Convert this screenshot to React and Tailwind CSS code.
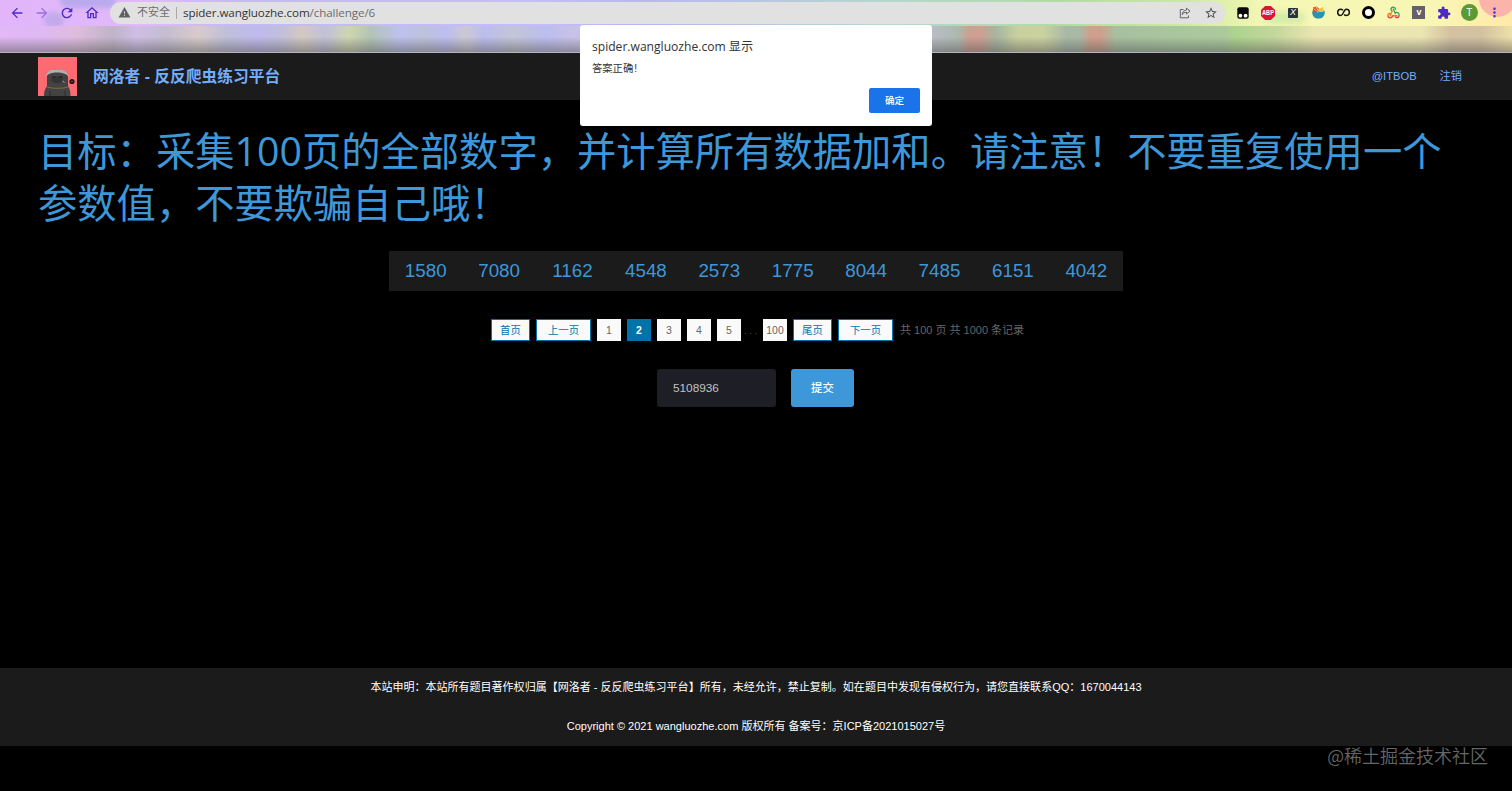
import { MdArrowBack, MdArrowForward, MdRefresh, MdOutlineHome, MdMoreVert, MdWarning, MdStarOutline, MdExtension } from "react-icons/md";

const numbers = [1580, 7080, 1162, 4548, 2573, 1775, 8044, 7485, 6151, 4042];

function PageButton({ children, active }) {
  return (
    <a
      href="#"
      className={
        "flex h-[22px] w-6 items-center justify-center pt-px text-[10.4px] " +
        (active ? "bg-[#0073a9] font-bold text-white" : "bg-[#fafafa] text-[#666]")
      }
    >
      {children}
    </a>
  );
}

function PageLink({ children, width }) {
  return (
    <a
      href="#"
      className={
        "flex h-[22px] items-center justify-center border border-[#0073a9] bg-[#fafafa] pt-px text-[10.4px] text-[#0073a9] " +
        width
      }
    >
      {children}
    </a>
  );
}

function ShareIcon() {
  return (
    <svg className="h-3 w-3" viewBox="0 0 12 12" fill="none" stroke="#5f6368" strokeWidth="1">
      <path d="M4.5 2.5H1.3v8.3h8.2V8.5" />
      <path d="M7.5 1.2 11 4.1 7.5 7V5.3C5.3 5.3 4 6 3.2 7.6 3.4 4.9 5 3.2 7.5 3z" strokeLinejoin="round" />
    </svg>
  );
}

function Extensions() {
  return (
    <div className="flex items-center">
      <span className="flex w-[25.2px] justify-center">
        <svg className="h-3 w-3" viewBox="0 0 12 12">
          <rect x="0.3" y="0.3" width="11.4" height="11.4" rx="2" fill="#080808" />
          <circle cx="3.4" cy="8.7" r="1.9" fill="#fff" />
          <circle cx="8.6" cy="8.7" r="1.9" fill="#fff" />
        </svg>
      </span>
      <span className="flex w-[25.2px] justify-center">
        <svg className="h-[14px] w-[14px]" viewBox="0 0 14 14">
          <path d="M4.1 0h5.8L14 4.1v5.8L9.9 14H4.1L0 9.9V4.1z" fill="#df1535" />
          <text x="7" y="9.3" textAnchor="middle" fontSize="6.5" textLength="12" lengthAdjust="spacingAndGlyphs" fontWeight="700" fontFamily="Liberation Sans, sans-serif" fill="#fff">
            ABP
          </text>
        </svg>
      </span>
      <span className="flex w-[25.2px] justify-center">
        <span className="flex h-[10px] w-[10px] items-center justify-center rounded-[1px] bg-[#29313b] text-[9px] leading-none text-white italic">
          X
        </span>
      </span>
      <span className="flex w-[25.2px] justify-center">
        <svg className="h-[13px] w-[13px]" viewBox="0 0 13 13">
          <path d="M1 1.5 4.5.6 8 3.5V6H.8z" fill="#e3482d" />
          <path d="M6 3.5 11 1l1.3 4.8H5z" fill="#f6c143" />
          <path d="m1.5 2.5 3 2.5M4 1l2 3" stroke="#f9d65c" />
          <path d="M.3 5.3c1.7 1.2 9.3 1.2 12.4-.3C13.3 9.5 10.5 12.6 6.5 12.6S-.3 9.5.3 5.3z" fill="#2c93ad" />
        </svg>
      </span>
      <span className="flex w-[25.2px] justify-center">
        <svg className="h-[9px] w-[13px]" viewBox="0 0 13 9" fill="none" stroke="#15150f" strokeWidth="1.5">
          <path d="M5.9 2.3C5.3 1.6 4.6 1.3 3.8 1.3a3 3 0 1 0 0 6.2C6.6 7.5 6.4 1.3 9.3 1.3a3 3 0 1 1 0 6.2C8.5 7.5 7.8 7.2 7.2 6.5" />
        </svg>
      </span>
      <span className="flex w-[25.2px] justify-center">
        <span className="h-[13px] w-[13px] rounded-full border-[3.5px] border-black bg-white" />
      </span>
      <span className="flex w-[25.2px] justify-center">
        <svg className="h-[13px] w-[13px]" viewBox="0 0 13 13" fill="none" strokeWidth="1.3" strokeLinecap="round">
          <path d="M4.5 4.7a2.2 2.2 0 1 1 3.9-1.3" stroke="#23a455" />
          <path d="M6.3 3 8.2 7.3a2.2 2.2 0 0 1 3.9 1" stroke="#2aa567" />
          <path d="M5.3 5 3.1 9.7" stroke="#f08a24" />
          <path d="M3 7.5a2.2 2.2 0 1 0 2.4 2.3h4.5" stroke="#ed3a38" />
          <path d="M12.1 9.3a2.2 2.2 0 0 1-3.4 2" stroke="#d63a4b" />
          <path d="M1 9.5a2.2 2.2 0 0 1 1-1.7" stroke="#f2b430" />
        </svg>
      </span>
      <span className="flex w-[25.2px] justify-center">
        <span className="flex h-[13px] w-[13px] items-center justify-center bg-[#666068] text-[9px] font-bold leading-none text-white">v</span>
      </span>
      <span className="flex w-[25.2px] justify-center">
        <MdExtension className="h-[14px] w-[14px] text-[#4d2bc3]" />
      </span>
      <span className="flex w-[25.2px] justify-center">
        <span className="flex h-[17px] w-[17px] shrink-0 items-center justify-center rounded-full bg-[#5b9a35] text-[10px] text-white">T</span>
      </span>
      <span className="flex w-[25.2px] justify-center">
        <MdMoreVert className="h-[15px] w-[15px] text-[#5330c0]" />
      </span>
    </div>
  );
}

function BrowserBar() {
  return (
    <div className="relative h-[53px] shrink-0 overflow-hidden bg-[linear-gradient(90deg,#e2b5fb_0%,#dfb9fa_10%,#c3b9f5_16%,#c4bdfb_35%,#b9b6f4_42%,#b4d7ce_58%,#b1dba5_70%,#cbe99f_78%,#f6f8b6_84%,#f9f6b4_95%,#ffe9a8_100%)]">
      {/* Theme artwork */}
      <span className="absolute -top-5 -right-1 h-[37px] w-[37px] rounded-full bg-[#fbb4aa]" />
      <span className="absolute top-3 left-11 h-4 w-5 rounded-full bg-[#c3abeb] blur-[2px]" />
      <span className="absolute -top-2 left-15 h-4 w-14 rounded-full bg-[#bba9ed] blur-[2px]" />
      <span className="absolute top-3 left-[1265px] h-3 w-10 rounded-full bg-[#d3eba6] blur-[3px]" />
      {/* Bookmarks */}
      <div className="absolute inset-x-0 top-[26px] h-[27px] bg-[linear-gradient(90deg,#e2b8f6_0%,#deb9f2_3%,#dfbcdd_5%,#c0b4c8_7.5%,#cfbde6_9%,#c4bdd0_11%,#d9cbca_13.1%,#bfbfda_15%,#bfb9ee_17%,#c0bedc_18.5%,#d4c9c1_20%,#c1c1d8_21.5%,#cfd6ae_23.1%,#b2c4b4_24.5%,#bdc1ef_26.5%,#bcc3da_28%,#bdbdf0_29.5%,#ccc9d3_30.8%,#bbbdee_32%,#c4c5d6_34%,#bbbdee_36%,#c9c2e8_38%,#b8bcc4_61.8%,#acbab0_63.3%,#ce9f92_64.1%,#ce9f92_64.9%,#a6b69f_65.9%,#c9cf9e_67.3%,#cbd19e_69%,#a9b9a6_70.5%,#a9b9a6_71.4%,#cf9f8d_72.1%,#cf9f8d_72.8%,#a8bfa0_73.8%,#a8c79e_78%,#acc99d_81%,#add48d_81.7%,#c3d79c_84.3%,#ebe6b0_87%,#ebe5b2_94%,#d3c1a1_96%,#d3c1a1_98%,#eee0a8_100%)]" />
      <div className="absolute inset-x-0 top-[26px] h-[27px] bg-linear-to-b from-transparent from-40% to-[#555]/55" />
      <div className="absolute inset-x-0 bottom-0 h-px bg-[#b9b3bd]" />
      {/* Toolbar */}
      <div className="relative flex h-[25px] items-center">
        <div className="flex w-[110px] shrink-0 items-center gap-[9px] pl-[9px] text-[#4f2bbd]">
          <MdArrowBack className="h-4 w-4" />
          <MdArrowForward className="h-4 w-4 text-[#9b6edb]" />
          <MdRefresh className="h-4 w-4" />
          <MdOutlineHome className="h-4 w-4" />
        </div>
        <div className="flex h-[22px] w-[1115px] shrink-0 items-center rounded-full bg-[#e1e1e1] pr-[7px] pl-[8px]">
          <MdWarning className="h-[13px] w-[13px] text-[#5f6063]" />
          <span className="ml-[6px] text-[11px] text-[#6d6e70]">不安全</span>
          <span className="mx-[6px] h-3 w-px bg-[#a9a9a9]" />
          <span className="font-['Open_Sans',sans-serif] text-[11.65px] tracking-[-0.1px] text-[#6b6c6e]">
            <span className="text-[#333]">spider.wangluozhe.com</span>/challenge/6
          </span>
          <span className="ml-auto flex items-center gap-[13px]">
            <ShareIcon />
            <MdStarOutline className="h-[14px] w-[14px] text-[#4d4f52]" />
          </span>
        </div>
        <div className="ml-[5px] shrink-0">
          <Extensions />
        </div>
      </div>
    </div>
  );
}

function Avatar() {
  return (
    <svg className="h-[39px] w-[39px]" viewBox="0 0 39 39">
      <rect width="39" height="39" fill="#fc6b72" />
      {/* Body */}
      <path d="M6 39C6 34 7.5 31 9 29V20C9 15 13 12.5 19 12.5S30 15 30 20v9c1.5 2 2.5 5 2.5 10z" fill="#434344" />
      {/* Hair */}
      <path d="M7.5 20C8.5 15 12.5 12.3 19 12.3S30 15 31 20C28 16.5 24 15.5 19 15.5S10.5 16.5 7.5 20z" fill="#b5adaf" />
      {/* Face */}
      <path d="M13.5 19.5h11.5v4.5l-3 2h-5.5l-3-2z" fill="#343437" />
      <path d="M14.5 19.5l3 1M24 19.5l-3 1" stroke="#1d1d1f" />
      <path d="M24.5 24l2 1.5" stroke="#b5adaf" />
      <path d="M9 30c6 1.8 15 1.8 21.5 0" fill="none" stroke="#8c713d" strokeWidth="0.9" />
      <path d="M12 34v5M27 34v5" stroke="#2b2b2d" />
      <circle cx="34" cy="24.5" r="2.6" fill="#24171a" />
      <circle cx="34" cy="24.5" r=".8" fill="#98463a" />
    </svg>
  );
}

function AlertDialog() {
  return (
    <div className="absolute top-[25px] left-[580px] flex h-[101px] w-[352px] flex-col rounded-[3px] bg-white px-[12px] pt-[13px]">
      <p className="font-['Open_Sans','Noto_Sans_CJK_SC',sans-serif] text-[12.1px] leading-[18px] text-[#333]">
        spider.wangluozhe.com 显示
      </p>
      <p className="mt-[5px] text-[10.3px] leading-4 text-[#333]">
        答案正确<span className="ml-px">!</span>
      </p>
      <button className="mt-[11px] flex h-[25px] w-[51px] items-center justify-center self-end rounded-[2px] bg-[#1a73e8] pt-px text-[9.5px] font-medium text-white">
        确定
      </button>
    </div>
  );
}

export default function App() {
  return (
    <div className="relative flex h-[791px] w-[1512px] flex-col overflow-hidden bg-black font-['Liberation_Sans','Noto_Sans_CJK_SC',sans-serif]">
      <BrowserBar />

      {/* Header */}
      <header className="flex h-[47px] shrink-0 items-center bg-[#1b1b1b] pr-[50px] pl-[38px] text-[#72aefc]">
        <Avatar />
        <h1 className="ml-[16px] pt-px text-[15.75px] font-bold">网洛者 - 反反爬虫练习平台</h1>
        <nav className="ml-auto flex gap-[23px] text-[11.2px]">
          <a href="#">@ITBOB</a>
          <a href="#">注销</a>
        </nav>
      </header>

      {/* Challenge */}
      <main className="flex flex-1 flex-col items-center">
        <h2 className="mt-[25px] mb-[2px] w-[1436px] font-['Open_Sans','Noto_Sans_CJK_SC',sans-serif] text-[39.3px] leading-[52px] text-[#3d97d9]">
          目标：采集100页的全部数字，并计算所有数据加和。请注意！不要重复使用一个参数值，不要欺骗自己哦！
        </h2>

        <div className="mt-[20px] grid h-[40px] w-[734px] grid-cols-10 items-center bg-[#1b1b1b] text-center text-[18.8px] text-[#3d97d9]">
          {numbers.map((n) => (
            <span key={n}>{n}</span>
          ))}
        </div>

        <div className="mt-[28px] flex w-[1512px] items-center gap-[6px] pl-[491px]">
          <PageLink width="w-[39px]">首页</PageLink>
          <PageLink width="w-[55px]">上一页</PageLink>
          <PageButton>1</PageButton>
          <PageButton active>2</PageButton>
          <PageButton>3</PageButton>
          <PageButton>4</PageButton>
          <PageButton>5</PageButton>
          <span className="-mx-[6px] w-[22px] pt-px text-center text-[10.4px] tracking-[2.5px] text-[#444]">...</span>
          <PageButton>100</PageButton>
          <PageLink width="w-[39px]">尾页</PageLink>
          <PageLink width="w-[55px]">下一页</PageLink>
          <span className="ml-px pt-px text-[11px] text-[#666]">共 100 页 共 1000 条记录</span>
        </div>

        <form className="mt-[28px] flex gap-[15px] pr-px">
          <input
            className="h-[38px] w-[119px] rounded-[3px] bg-[#1e1e26] px-[16px] text-[11.8px] text-[#c2c2c2]"
            defaultValue="5108936"
          />
          <button type="button" className="h-[38px] w-[63px] rounded-[3px] bg-[#3d97d9] pt-px text-[11.4px] font-medium text-white">
            提交
          </button>
        </form>
      </main>

      {/* Footer */}
      <footer className="mb-[45px] h-[78px] shrink-0 bg-[#1b1b1b] text-center text-[11.03px] leading-[39px] text-white">
        <p>本站申明：本站所有题目著作权归属【网洛者 - 反反爬虫练习平台】所有，未经允许，禁止复制。如在题目中发现有侵权行为，请您直接联系QQ：1670044143</p>
        <p>Copyright © 2021 wangluozhe.com 版权所有 备案号：京ICP备2021015027号</p>
      </footer>

      <AlertDialog />
      <span className="absolute right-[24px] bottom-[23px] font-['Noto_Sans_CJK_SC',sans-serif] text-[18px] leading-[26px] font-[350] text-[#666]">
        @稀土掘金技术社区
      </span>
    </div>
  );
}
